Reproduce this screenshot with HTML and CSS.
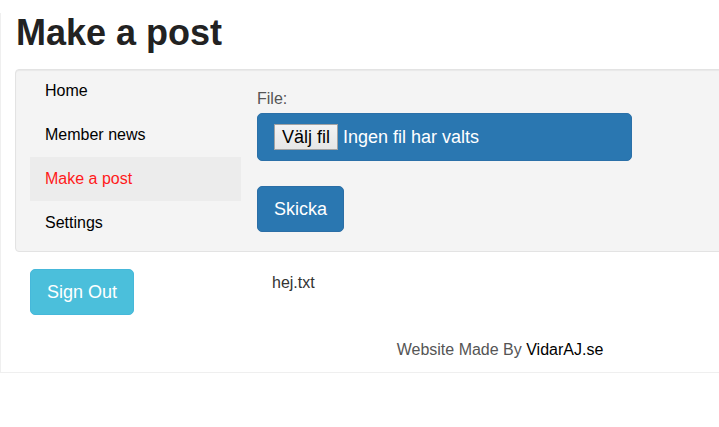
FILE: index.html
```html
<!DOCTYPE html>
<html lang="sv">
<head>
<meta charset="utf-8">
<title>Make a post</title>
<link rel="stylesheet" href="styles.css">
</head>
<body>
<div class="page">
  <h1 class="title">Make a post</h1>
  <div class="well">
    <ul class="nav">
      <li class="nav-item"><a href="#">Home</a></li>
      <li class="nav-item"><a href="#">Member news</a></li>
      <li class="nav-item active"><a href="#">Make a post</a></li>
      <li class="nav-item"><a href="#">Settings</a></li>
    </ul>
    <form class="content">
      <label class="label">File:</label>
      <div class="file-input">
        <span class="file-btn">Välj fil</span>
        <span class="file-name">Ingen fil har valts</span>
      </div>
      <button type="button" class="btn btn-primary">Skicka</button>
    </form>
  </div>
  <div class="below">
    <div class="side">
      <button type="button" class="btn btn-info">Sign Out</button>
    </div>
    <div class="files">hej.txt</div>
  </div>
  <footer class="footer">Website Made By <a href="#">VidarAJ.se</a></footer>
</div>
</body>
</html>
```
FILE: styles.css
```css
html, body {
  margin: 0;
  padding: 0;
  overflow: hidden;
  background: #fff;
}
body {
  font-family: "Liberation Sans", Arial, sans-serif;
  font-size: 16px;
  line-height: 1.42857;
  color: #333;
}
.page {
  box-sizing: border-box;
  width: 1000px;
  padding: 0 15px 11px 15px;
  border: 1px solid #efefef;
  border-top: none;
}
.title {
  margin: 13px 0 16px 0;
  font-size: 36px;
  line-height: 40px;
  font-weight: bold;
  color: #222;
}
.well {
  display: flex;
  gap: 16px;
  background: #f4f4f4;
  border: 1px solid #e3e3e3;
  border-radius: 4px;
  box-shadow: inset 0 1px 1px rgba(0,0,0,0.05);
  padding: 0 0 0 14px;
  margin-left: -1px;
}
.nav {
  list-style: none;
  margin: -1px 0 0 0;
  padding: 0;
  width: 211px;
  flex: none;
}
.nav-item a {
  display: block;
  padding: 10px 15px;
  line-height: 24px;
  color: #000;
  text-decoration: none;
  border-radius: 0;
}
.nav-item.active a {
  background: #ececec;
  color: #ff1a1a;
}
.content {
  display: flex;
  flex-direction: column;
  align-items: flex-start;
  padding: 17px 0 19px 0;
}
.label {
  color: #555;
  line-height: 23px;
  margin-bottom: 3px;
}
.file-input {
  box-sizing: border-box;
  width: 375px;
  height: 48px;
  display: flex;
  align-items: center;
  gap: 5px;
  padding: 0 16px;
  background: #2a77b1;
  border: 1px solid #2b70a8;
  border-radius: 5px;
  color: #fff;
  font-size: 18px;
}
.file-btn {
  box-sizing: border-box;
  height: 26px;
  line-height: 24px;
  padding: 0 7px;
  background: linear-gradient(#f3f3f3, #e6e6e6);
  border: 1px solid #a3a3a3;
  color: #000;
}
.file-name {
  line-height: 24px;
}
.btn {
  font-family: "Liberation Sans", Arial, sans-serif;
  font-size: 18px;
  line-height: 24px;
  padding: 10px 16px;
  border-radius: 5px;
  color: #fff;
  cursor: pointer;
}
.btn-primary {
  margin-top: 25px;
  background: #2a77b1;
  border: 1px solid #2b6ea6;
}
.btn-info {
  background: #4bbfdb;
  border: 1px solid #46b8da;
}
.below {
  display: flex;
  gap: 16px;
  padding-top: 17px;
}
.side {
  width: 211px;
  padding-left: 14px;
  flex: none;
}
.files {
  padding-left: 15px;
  line-height: 23px;
  padding-top: 2px;
}
.footer {
  text-align: center;
  color: #555;
  line-height: 23px;
  margin-top: 23px;
}
.footer a {
  color: #000;
  text-decoration: none;
}
```
